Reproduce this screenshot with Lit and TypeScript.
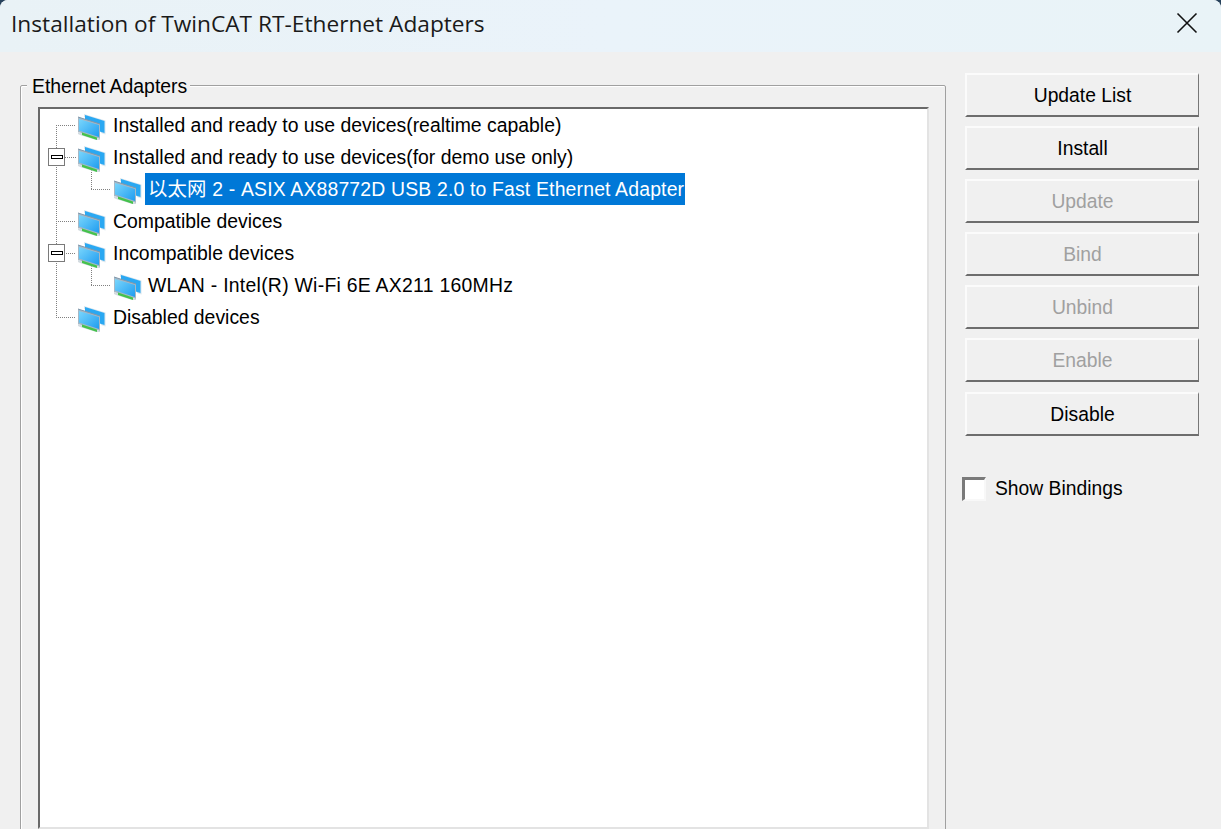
import { LitElement, html, css, svg } from "lit";
import { customElement } from "lit/decorators.js";

const monitor = svg`
  <polygon points="7,0 28.5,6.5 28.5,20.5 24,19 24,8 7,3" fill="#d9e6ee"/>
  <polygon points="8,1 27.5,7 27.5,19 8,13" fill="#2aa8f2"/>
  <polygon points="1,3 23,10 23,25 1,18" fill="#a6b8c6"/>
  <polygon points="2,5 22,11 22,23 2,16.5" fill="url(#scr)"/>
  <polygon points="1,18 23,25 23,26 19,26 3,21 1,20" fill="#d3dbe0"/>
  <polygon points="5,18.5 20,23.5 20,26 5,21" fill="#45c24c"/>
  <line x1="1" y1="3" x2="23" y2="10" stroke="#7f98ac" stroke-width="1"/>
`;

const rows = [
  { text: "Installed and ready to use devices(realtime capable)", child: false, cls: "" },
  { text: "Installed and ready to use devices(for demo use only)", child: false, cls: "" },
  { text: "以太网 2 - ASIX AX88772D USB 2.0 to Fast Ethernet Adapter", child: true, cls: "sel" },
  { text: "Compatible devices", child: false, cls: "" },
  { text: "Incompatible devices", child: false, cls: "" },
  { text: "WLAN - Intel(R) Wi-Fi 6E AX211 160MHz", child: true, cls: "wide" },
  { text: "Disabled devices", child: false, cls: "" },
];

const buttons: [string, boolean][] = [
  ["Update List", true],
  ["Install", true],
  ["Update", false],
  ["Bind", false],
  ["Unbind", false],
  ["Enable", false],
  ["Disable", true],
];

@customElement("app-root")
export class AppRoot extends LitElement {
  static styles = css`
    :host { display: block; width: 1221px; height: 829px; overflow: hidden; background: #27425c; font-family: "Liberation Sans", Arial, sans-serif; }
    .win { width: 1221px; height: 829px; overflow: hidden; border-radius: 8px 8px 0 0; background: #f0f0f0; display: flex; flex-direction: column; }
    .title { flex: none; height: 52px; background: linear-gradient(90deg, #e9f2f6, #eaf3fa 50%, #e9f3f7); display: flex; align-items: center; justify-content: space-between; padding: 0 23px 6px 11px; box-sizing: border-box; }
    .title span { font: 22.7px "Open Sans", "Noto Sans", sans-serif; color: #1a1a1a; }
    .title svg { display: block; }
    .body { flex: 1; min-height: 0; display: flex; gap: 19px; padding: 33px 0 0 20px; overflow: hidden; }
    .group { flex: none; width: 926px; box-sizing: border-box; border: 1px solid #a0a0a0; box-shadow: inset 1px 1px 0 #fff; padding: 0 17px 20px; height: 770px; border-radius: 2px 2px 0 0; }
    .legend { width: fit-content; height: 21px; line-height: 23px; margin: -11px 0 11px -11px; padding: 0 3px 0 5px; background: #f0f0f0; font-size: 19.4px; color: #000; }
    .tree { position: relative; box-sizing: border-box; width: 891px; height: 722px; background: #fff; border-style: solid; border-width: 2px; border-color: #696969 #e3e3e3 #e3e3e3 #696969; }
    .lines { position: absolute; left: 0; top: 0; }
    .row { position: relative; height: 32px; display: flex; align-items: center; padding-left: 37px; font-size: 19.4px; color: #000; white-space: nowrap; }
    .row.child { padding-left: 73px; }
    .icon { flex: none; width: 29px; height: 26px; margin: 4px -1px 0 0; display: block; }
    .label { margin-left: 5px; padding: 0 1px 0 3px; height: 32px; line-height: 33px; font-family: "Liberation Sans", "Noto Sans CJK SC", sans-serif; }
    .row.child .label { margin-left: 4px; }
    .label.sel { background: #0078d7; color: #fff; letter-spacing: 0.17px; }
    .label.wide { letter-spacing: 0.27px; }
    .side { flex: none; width: 234px; display: flex; flex-direction: column; margin-top: -12px; }
    .btn { box-sizing: border-box; height: 44px; margin-bottom: 9.1px; padding-top: 2px; display: flex; align-items: center; justify-content: center; font-size: 19.3px; color: #000; background: #f0f0f0; border-style: solid; border-width: 2px 1px 2px 2px; border-color: #fbfbfb #777 #6d6d6d #fbfbfb; }
    .btn.off { color: #a0a0a0; }
    .check { display: flex; align-items: center; margin: 31px 0 0 -3px; font-size: 19.3px; color: #000; }
    .check-label { line-height: 26px; }
    .box { box-sizing: border-box; width: 24px; height: 24px; background: #fff; border-style: solid; border-width: 3px 2px 2px 3px; border-color: #7a7a7a #f8f8f8 #f8f8f8 #7a7a7a; margin-right: 9px; }
  `;

  render() {
    return html`
      <div class="win">
        <div class="title">
          <span>Installation of TwinCAT RT-Ethernet Adapters</span>
          <svg width="22" height="22" viewBox="0 0 22 22"><path d="M1.5 1.5 L20.5 20.5 M20.5 1.5 L1.5 20.5" stroke="#111" stroke-width="1.6" fill="none"/></svg>
        </div>
        <div class="body">
          <div class="group">
            <div class="legend">Ethernet Adapters</div>
            <div class="tree">
              <svg class="lines" width="887" height="300" viewBox="40 109 887 300" shape-rendering="crispEdges">
                <defs>
                  <linearGradient id="scr" x1="0" y1="0" x2="1" y2="1"><stop offset="0" stop-color="#7ad6fc"/><stop offset="1" stop-color="#1f9cf0"/></linearGradient>
                </defs>
                <path d="M56.5 125 V317 M56 125.5 H76 M65 157.5 H76 M56 253.5 H76 M56 221.5 H76 M56 317.5 H76 M91.5 170 V189 M91 189.5 H111 M91.5 266 V285 M91 285.5 H111" stroke="#808080" stroke-width="1" stroke-dasharray="1 1" fill="none"/>
                ${[157, 253].map((y) => svg`
                  <rect x="48.5" y="${y - 8.5}" width="16" height="17" fill="#fff" stroke="#7a7a7a"/>
                  <rect x="51" y="${y - 1.5}" width="11" height="3" fill="#fff" stroke="#000" stroke-width="1"/>
                `)}
              </svg>
              ${rows.map((r) => html`
                <div class="row ${r.child ? "child" : ""}">
                  <svg class="icon" viewBox="0 0 29 26">${monitor}</svg>
                  <span class="label ${r.cls}">${r.text}</span>
                </div>`)}
            </div>
          </div>
          <div class="side">
            ${buttons.map(([t, on]) => html`<div class="btn ${on ? "" : "off"}">${t}</div>`)}
            <div class="check"><span class="box"></span><span class="check-label">Show Bindings</span></div>
          </div>
        </div>
      </div>
    `;
  }
}
